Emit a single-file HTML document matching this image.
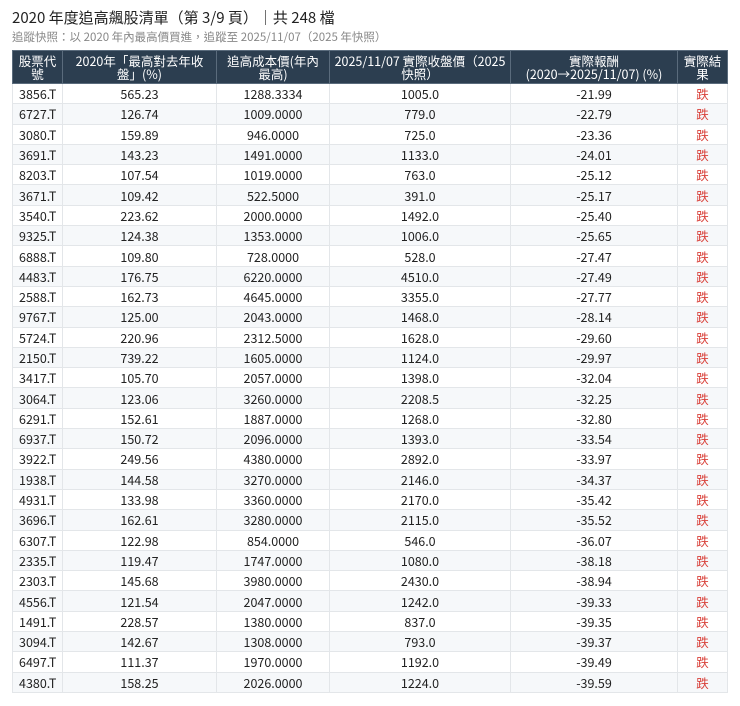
<!DOCTYPE html>
<html><head><meta charset="utf-8"><style>
body{margin:0;background:#fff;font-family:"Liberation Sans","Noto Sans CJK TC",sans-serif;color:#222}
.t1{position:absolute;left:12px;top:7px;font-size:15px;font-family:"Noto Sans CJK TC",sans-serif;color:#222}
.t2{position:absolute;left:12px;top:29px;font-size:11.5px;font-family:"Noto Sans CJK TC",sans-serif;color:#888}
table{position:absolute;left:12px;top:50px;border-collapse:collapse;width:715px;table-layout:fixed;font-family:"Noto Sans CJK TC",sans-serif;font-size:12.5px}
th{background:#2c3e50;color:#fff;font-weight:normal;height:32px;line-height:13px;padding:0 4px;border:1px solid #5a6b7c;font-size:12.5px}
td{height:19.3px;line-height:19px;padding:0 6px;border:1px solid #e3e6e9;text-align:center}
td:first-child{text-align:left}
tr:nth-child(even) td{background:#f6f8fa}
td.r{color:#d9413a}
</style></head><body>
<div class="t1">2020 年度追高飆股清單（第 3/9 頁）｜共 248 檔</div>
<div class="t2">追蹤快照：以 2020 年內最高價買進，追蹤至 2025/11/07（2025 年快照）</div>
<table>
<colgroup><col style="width:50px"><col style="width:154px"><col style="width:113px"><col style="width:181px"><col style="width:167px"><col style="width:50px"></colgroup>
<thead><tr><th>股票代號</th><th>2020年「最高對去年收盤」(%)</th><th>追高成本價(年內最高)</th><th>2025/11/07 實際收盤價（2025快照）</th><th>實際報酬<br>(2020→2025/11/07) (%)</th><th>實際結果</th></tr></thead>
<tbody>
<tr><td>3856.T</td><td>565.23</td><td>1288.3334</td><td>1005.0</td><td>-21.99</td><td class="r">跌</td></tr>
<tr><td>6727.T</td><td>126.74</td><td>1009.0000</td><td>779.0</td><td>-22.79</td><td class="r">跌</td></tr>
<tr><td>3080.T</td><td>159.89</td><td>946.0000</td><td>725.0</td><td>-23.36</td><td class="r">跌</td></tr>
<tr><td>3691.T</td><td>143.23</td><td>1491.0000</td><td>1133.0</td><td>-24.01</td><td class="r">跌</td></tr>
<tr><td>8203.T</td><td>107.54</td><td>1019.0000</td><td>763.0</td><td>-25.12</td><td class="r">跌</td></tr>
<tr><td>3671.T</td><td>109.42</td><td>522.5000</td><td>391.0</td><td>-25.17</td><td class="r">跌</td></tr>
<tr><td>3540.T</td><td>223.62</td><td>2000.0000</td><td>1492.0</td><td>-25.40</td><td class="r">跌</td></tr>
<tr><td>9325.T</td><td>124.38</td><td>1353.0000</td><td>1006.0</td><td>-25.65</td><td class="r">跌</td></tr>
<tr><td>6888.T</td><td>109.80</td><td>728.0000</td><td>528.0</td><td>-27.47</td><td class="r">跌</td></tr>
<tr><td>4483.T</td><td>176.75</td><td>6220.0000</td><td>4510.0</td><td>-27.49</td><td class="r">跌</td></tr>
<tr><td>2588.T</td><td>162.73</td><td>4645.0000</td><td>3355.0</td><td>-27.77</td><td class="r">跌</td></tr>
<tr><td>9767.T</td><td>125.00</td><td>2043.0000</td><td>1468.0</td><td>-28.14</td><td class="r">跌</td></tr>
<tr><td>5724.T</td><td>220.96</td><td>2312.5000</td><td>1628.0</td><td>-29.60</td><td class="r">跌</td></tr>
<tr><td>2150.T</td><td>739.22</td><td>1605.0000</td><td>1124.0</td><td>-29.97</td><td class="r">跌</td></tr>
<tr><td>3417.T</td><td>105.70</td><td>2057.0000</td><td>1398.0</td><td>-32.04</td><td class="r">跌</td></tr>
<tr><td>3064.T</td><td>123.06</td><td>3260.0000</td><td>2208.5</td><td>-32.25</td><td class="r">跌</td></tr>
<tr><td>6291.T</td><td>152.61</td><td>1887.0000</td><td>1268.0</td><td>-32.80</td><td class="r">跌</td></tr>
<tr><td>6937.T</td><td>150.72</td><td>2096.0000</td><td>1393.0</td><td>-33.54</td><td class="r">跌</td></tr>
<tr><td>3922.T</td><td>249.56</td><td>4380.0000</td><td>2892.0</td><td>-33.97</td><td class="r">跌</td></tr>
<tr><td>1938.T</td><td>144.58</td><td>3270.0000</td><td>2146.0</td><td>-34.37</td><td class="r">跌</td></tr>
<tr><td>4931.T</td><td>133.98</td><td>3360.0000</td><td>2170.0</td><td>-35.42</td><td class="r">跌</td></tr>
<tr><td>3696.T</td><td>162.61</td><td>3280.0000</td><td>2115.0</td><td>-35.52</td><td class="r">跌</td></tr>
<tr><td>6307.T</td><td>122.98</td><td>854.0000</td><td>546.0</td><td>-36.07</td><td class="r">跌</td></tr>
<tr><td>2335.T</td><td>119.47</td><td>1747.0000</td><td>1080.0</td><td>-38.18</td><td class="r">跌</td></tr>
<tr><td>2303.T</td><td>145.68</td><td>3980.0000</td><td>2430.0</td><td>-38.94</td><td class="r">跌</td></tr>
<tr><td>4556.T</td><td>121.54</td><td>2047.0000</td><td>1242.0</td><td>-39.33</td><td class="r">跌</td></tr>
<tr><td>1491.T</td><td>228.57</td><td>1380.0000</td><td>837.0</td><td>-39.35</td><td class="r">跌</td></tr>
<tr><td>3094.T</td><td>142.67</td><td>1308.0000</td><td>793.0</td><td>-39.37</td><td class="r">跌</td></tr>
<tr><td>6497.T</td><td>111.37</td><td>1970.0000</td><td>1192.0</td><td>-39.49</td><td class="r">跌</td></tr>
<tr><td>4380.T</td><td>158.25</td><td>2026.0000</td><td>1224.0</td><td>-39.59</td><td class="r">跌</td></tr>
</tbody></table>
</body></html>
